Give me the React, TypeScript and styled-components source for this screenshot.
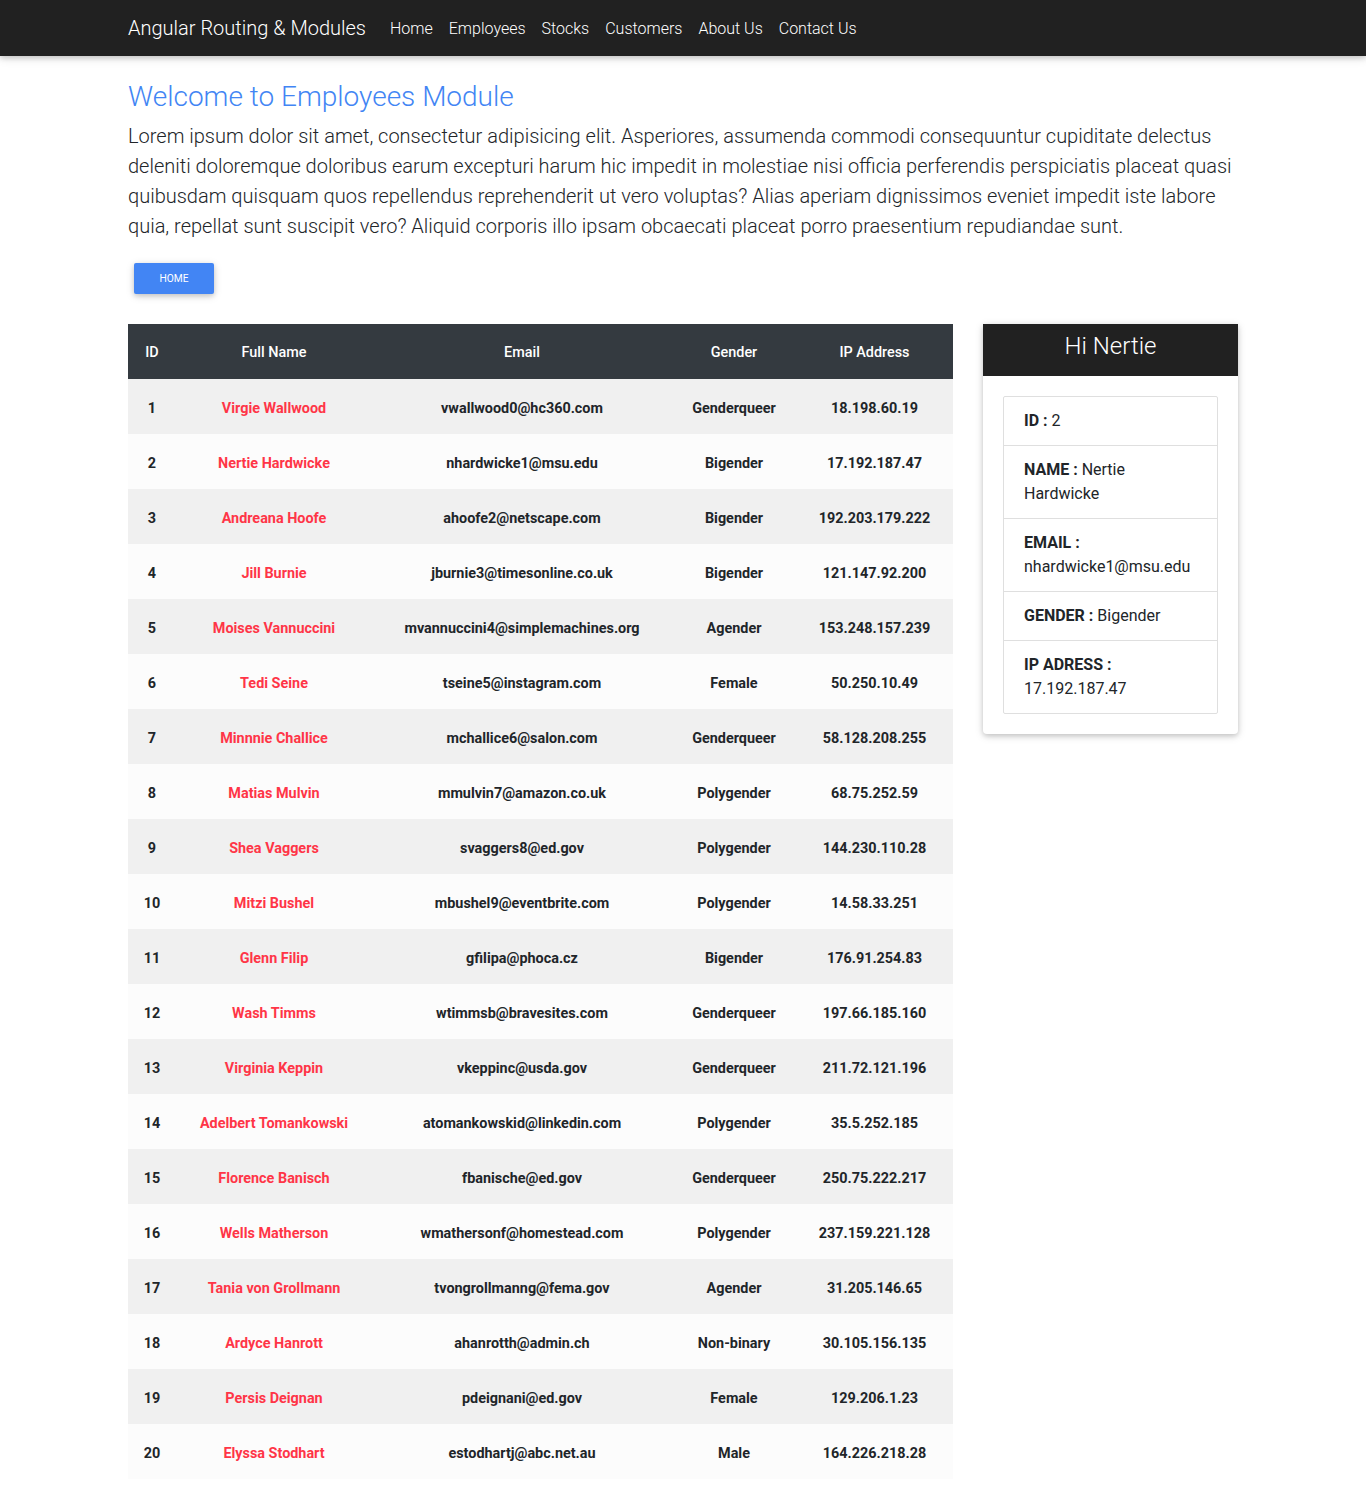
import React from 'react';
import styled, { createGlobalStyle } from 'styled-components';

type Employee = {
   id: number;
   name: string;
   email: string;
   gender: string;
   ip: string;
};

const employees: Employee[] = [
   { id: 1, name: 'Virgie Wallwood', email: 'vwallwood0@hc360.com', gender: 'Genderqueer', ip: '18.198.60.19' },
   { id: 2, name: 'Nertie Hardwicke', email: 'nhardwicke1@msu.edu', gender: 'Bigender', ip: '17.192.187.47' },
   { id: 3, name: 'Andreana Hoofe', email: 'ahoofe2@netscape.com', gender: 'Bigender', ip: '192.203.179.222' },
   { id: 4, name: 'Jill Burnie', email: 'jburnie3@timesonline.co.uk', gender: 'Bigender', ip: '121.147.92.200' },
   { id: 5, name: 'Moises Vannuccini', email: 'mvannuccini4@simplemachines.org', gender: 'Agender', ip: '153.248.157.239' },
   { id: 6, name: 'Tedi Seine', email: 'tseine5@instagram.com', gender: 'Female', ip: '50.250.10.49' },
   { id: 7, name: 'Minnnie Challice', email: 'mchallice6@salon.com', gender: 'Genderqueer', ip: '58.128.208.255' },
   { id: 8, name: 'Matias Mulvin', email: 'mmulvin7@amazon.co.uk', gender: 'Polygender', ip: '68.75.252.59' },
   { id: 9, name: 'Shea Vaggers', email: 'svaggers8@ed.gov', gender: 'Polygender', ip: '144.230.110.28' },
   { id: 10, name: 'Mitzi Bushel', email: 'mbushel9@eventbrite.com', gender: 'Polygender', ip: '14.58.33.251' },
   { id: 11, name: 'Glenn Filip', email: 'gfilipa@phoca.cz', gender: 'Bigender', ip: '176.91.254.83' },
   { id: 12, name: 'Wash Timms', email: 'wtimmsb@bravesites.com', gender: 'Genderqueer', ip: '197.66.185.160' },
   { id: 13, name: 'Virginia Keppin', email: 'vkeppinc@usda.gov', gender: 'Genderqueer', ip: '211.72.121.196' },
   { id: 14, name: 'Adelbert Tomankowski', email: 'atomankowskid@linkedin.com', gender: 'Polygender', ip: '35.5.252.185' },
   { id: 15, name: 'Florence Banisch', email: 'fbanische@ed.gov', gender: 'Genderqueer', ip: '250.75.222.217' },
   { id: 16, name: 'Wells Matherson', email: 'wmathersonf@homestead.com', gender: 'Polygender', ip: '237.159.221.128' },
   { id: 17, name: 'Tania von Grollmann', email: 'tvongrollmanng@fema.gov', gender: 'Agender', ip: '31.205.146.65' },
   { id: 18, name: 'Ardyce Hanrott', email: 'ahanrotth@admin.ch', gender: 'Non-binary', ip: '30.105.156.135' },
   { id: 19, name: 'Persis Deignan', email: 'pdeignani@ed.gov', gender: 'Female', ip: '129.206.1.23' },
   { id: 20, name: 'Elyssa Stodhart', email: 'estodhartj@abc.net.au', gender: 'Male', ip: '164.226.218.28' },
];

const selected = employees[1];

const navLinks = ['Home', 'Employees', 'Stocks', 'Customers', 'About Us', 'Contact Us'];

const columns = [
   { label: 'ID', width: 48 },
   { label: 'Full Name', width: 196 },
   { label: 'Email', width: 300 },
   { label: 'Gender', width: 124 },
   { label: 'IP Address', width: 157 },
];

export default function App() {

   return (
      <>
         <GlobalStyle />
         <Navbar>
            <NavInner>
               <Brand>Angular Routing &amp; Modules</Brand>
               <NavList>
                  {navLinks.map((link) => (
                     <NavLink key={link}>{link}</NavLink>
                  ))}
               </NavList>
            </NavInner>
         </Navbar>

         <Container>
            <Title>Welcome to Employees Module</Title>
            <Lead>
               Lorem ipsum dolor sit amet, consectetur adipisicing elit. Asperiores, assumenda commodi consequuntur
               cupiditate delectus deleniti doloremque doloribus earum excepturi harum hic impedit in molestiae nisi
               officia perferendis perspiciatis placeat quasi quibusdam quisquam quos repellendus reprehenderit ut vero
               voluptas? Alias aperiam dignissimos eveniet impedit iste labore quia, repellat sunt suscipit vero? Aliquid
               corporis illo ipsam obcaecati placeat porro praesentium repudiandae sunt.
            </Lead>
            <HomeButton>Home</HomeButton>

            <Row>
               <Table>
                  <colgroup>
                     {columns.map((c) => (
                        <col key={c.label} style={{ width: c.width }} />
                     ))}
                  </colgroup>
                  <thead>
                     <tr>
                        {columns.map((c) => (
                           <Th key={c.label}>{c.label}</Th>
                        ))}
                     </tr>
                  </thead>
                  <tbody>
                     {employees.map((e) => (
                        <Tr key={e.id}>
                           <Td>{e.id}</Td>
                           <Td $accent>{e.name}</Td>
                           <Td>{e.email}</Td>
                           <Td>{e.gender}</Td>
                           <Td>{e.ip}</Td>
                        </Tr>
                     ))}
                  </tbody>
               </Table>

               <Card>
                  <CardHeader>Hi {selected.name.split(' ')[0]}</CardHeader>
                  <CardBody>
                     <ListGroup>
                        <ListItem><b>ID :</b> {selected.id}</ListItem>
                        <ListItem><b>NAME :</b> {selected.name}</ListItem>
                        <ListItem><b>EMAIL :</b> {selected.email}</ListItem>
                        <ListItem><b>GENDER :</b> {selected.gender}</ListItem>
                        <ListItem><b>IP ADRESS :</b> {selected.ip}</ListItem>
                     </ListGroup>
                  </CardBody>
               </Card>
            </Row>
         </Container>
      </>
   );

}

const GlobalStyle = createGlobalStyle`

   body {
      margin: 0;
      font-family: Roboto, 'Liberation Sans', sans-serif;
      color: #212529;
      background: #fff;
   }

   *, *::before, *::after { box-sizing: border-box; }

`;

const Navbar = styled.nav`

   height: 56px;
   background: #212121;
   box-shadow: 0 2px 5px 0 rgba(0, 0, 0, 0.16), 0 2px 10px 0 rgba(0, 0, 0, 0.12);

`;

const NavInner = styled.div`

   width: 1140px;
   height: 100%;
   margin: 0 auto;
   padding: 0 15px;
   display: flex;
   align-items: center;

`;

const Brand = styled.a`

   font-size: 20px;
   font-weight: 300;
   color: #fff;
   margin-right: 16px;
   white-space: nowrap;

`;

const NavList = styled.div`

   display: flex;

`;

const NavLink = styled.a`

   font-size: 16px;
   font-weight: 300;
   color: #fff;
   padding: 0 8px;

`;

const Container = styled.main`

   width: 1140px;
   margin: 0 auto;
   padding: 24px 15px 0;

`;

const Title = styled.h3`

   margin: 0 0 7px;
   font-size: 28px;
   line-height: 1.2;
   font-weight: 300;
   color: #4285f4;

`;

const Lead = styled.p`

   margin: 0 0 16px;
   font-size: 20px;
   line-height: 30px;
   font-weight: 300;

`;

const HomeButton = styled.button`

   margin: 6px;
   width: 80px;
   height: 31px;
   border: 0;
   border-radius: 2px;
   background: #4285f4;
   color: #fff;
   font-family: inherit;
   font-size: 10.24px;
   text-transform: uppercase;
   box-shadow: 0 2px 5px 0 rgba(0, 0, 0, 0.16), 0 2px 10px 0 rgba(0, 0, 0, 0.12);

`;

const Row = styled.div`

   display: flex;
   align-items: flex-start;
   gap: 30px;
   margin-top: 24px;
   padding-bottom: 15px;

`;

const Table = styled.table`

   width: 825px;
   table-layout: fixed;
   border-collapse: collapse;
   font-size: 14.4px;

`;

const Th = styled.th`

   height: 55px;
   padding: 3px 0 0;
   background: #343a40;
   color: #fff;
   font-weight: 500;
   text-align: center;
   vertical-align: middle;

`;

const Tr = styled.tr`

   height: 55px;
   background: #fcfcfc;

   &:nth-of-type(odd) { background: #f0f0f0; }

`;

const Td = styled.td<{ $accent?: boolean }>`

   padding: 5px 0 0;
   text-align: center;
   vertical-align: middle;
   font-weight: 700;
   color: ${(p) => (p.$accent ? '#ff3547' : '#212529')};

`;

const Card = styled.section`

   width: 255px;
   background: #fff;
   border-radius: 0 0 4px 4px;
   box-shadow: 0 2px 5px 0 rgba(0, 0, 0, 0.16), 0 2px 10px 0 rgba(0, 0, 0, 0.12);

`;

const CardHeader = styled.h3`

   margin: 0;
   height: 52px;
   padding-top: 8px;
   background: #212121;
   color: #fff;
   text-align: center;
   font-size: 24px;
   line-height: 28.8px;
   font-weight: 300;

`;

const CardBody = styled.div`

   padding: 20px;

`;

const ListGroup = styled.ul`

   margin: 0;
   padding: 0;
   list-style: none;
   border: 1px solid rgba(0, 0, 0, 0.125);
   border-radius: 2px;

`;

const ListItem = styled.li`

   padding: 12px 20px;
   font-size: 16px;
   line-height: 24px;
   font-weight: 400;

   & + & { border-top: 1px solid rgba(0, 0, 0, 0.125); }

   b { font-weight: 700; }

`;
